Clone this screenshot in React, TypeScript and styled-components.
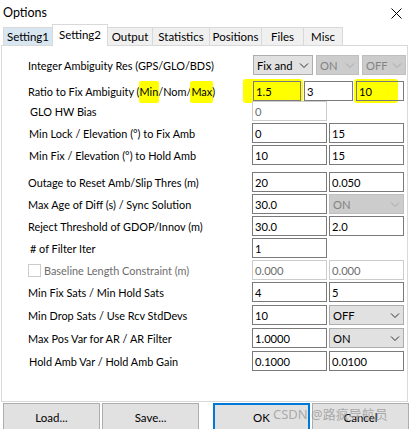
import React from "react";
import styled, { createGlobalStyle, css } from "styled-components";

const GlobalStyle = createGlobalStyle`
  body {
    margin: 0;
    background: #ffffff;
    font-family: Lato, "Liberation Sans", sans-serif;
    font-size: 10.9px;
    color: #000000;
  }
`;

const Window = styled.div`
  width: 412px;
  height: 429px;
  overflow: hidden;
  position: relative;
  background: #ffffff;
  display: flex;
  flex-direction: column;
`;

const TitleBar = styled.div`
  height: 25px;
  display: flex;
  align-items: center;
  justify-content: space-between;
  padding: 0 10px 0 3px;
  font-size: 12.5px;
  flex-shrink: 0;
`;

const CloseIcon = styled.svg`
  width: 11px;
  height: 11px;
  margin-top: 1px;
`;

const TabRow = styled.div`
  height: 21px;
  display: flex;
  align-items: flex-end;
  padding-left: 3px;
  flex-shrink: 0;
  position: relative;
  z-index: 1;
`;

const Tab = styled.div<{ $active?: boolean; $hover?: boolean; $w: number }>`
  width: ${(p) => p.$w}px;
  height: 19px;
  box-sizing: border-box;
  border: 1px solid #d9d9d9;
  border-right: none;
  display: flex;
  align-items: center;
  justify-content: center;
  font-size: 11.5px;
  background: ${(p) => (p.$hover ? "#d8e6f2" : "#f0f0f0")};
  &:last-child {
    border-right: 1px solid #d9d9d9;
  }
  ${(p) =>
    p.$active &&
    css`
      height: 22px;
      background: #ffffff;
      border-bottom: none;
      border-right: 1px solid #d9d9d9;
      margin-right: -1px;
      padding-bottom: 3px;
      position: relative;
      z-index: 2;
    `}
`;

const Panel = styled.div`
  margin-left: 1px;
  margin-top: -1px;
  width: 407px;
  height: 357px;
  box-sizing: border-box;
  border: 1px solid #d9d9d9;
  background: #ffffff;
  padding-top: 9px;
  display: flex;
  flex-direction: column;
  flex-shrink: 0;
`;

const Row = styled.div<{ $extra?: number }>`
  display: grid;
  grid-template-columns: 250px 1fr;
  align-items: center;
  height: 20px;
  margin-top: ${(p) => 2 + (p.$extra ?? 0)}px;
  &:first-child {
    margin-top: 0;
  }
`;

const Label = styled.div<{ $indent?: number; $disabled?: boolean }>`
  padding-left: ${(p) => 26 + (p.$indent ?? 0)}px;
  white-space: nowrap;
  color: ${(p) => (p.$disabled ? "#6d6d6d" : "#000000")};
  display: flex;
  align-items: center;
  position: relative;
`;

const Controls = styled.div<{ $cols: string; $gap: number; $shift?: number }>`
  display: grid;
  grid-template-columns: ${(p) => p.$cols};
  column-gap: ${(p) => p.$gap}px;
  margin-left: ${(p) => p.$shift ?? 0}px;
  height: 20px;
`;

const Field = styled.div<{ $disabled?: boolean; $marked?: boolean }>`
  box-sizing: border-box;
  height: 20px;
  border: 1px solid ${(p) => (p.$disabled ? "#cccccc" : "#7a7a7a")};
  background: ${(p) => (p.$marked ? "#ffff00" : "#ffffff")};
  color: ${(p) => (p.$disabled ? "#6d6d6d" : "#000000")};
  padding-left: 2px;
  display: flex;
  align-items: center;
  overflow: hidden;
  white-space: nowrap;
  position: relative;
  font-size: 11.2px;
`;

const Select = styled.div<{ $disabled?: boolean }>`
  box-sizing: border-box;
  height: 20px;
  border: 1px solid ${(p) => (p.$disabled ? "#bfbfbf" : "#adadad")};
  background: ${(p) => (p.$disabled ? "#cccccc" : "#e1e1e1")};
  color: ${(p) => (p.$disabled ? "#838383" : "#000000")};
  display: flex;
  align-items: center;
  padding-left: 3px;
  overflow: hidden;
  font-size: 11.2px;
`;

const SelectText = styled.span`
  flex: 1;
  min-width: 0;
  overflow: hidden;
  white-space: nowrap;
  text-overflow: clip;
`;

const Chevron = styled.svg<{ $disabled?: boolean }>`
  width: 16px;
  height: 8px;
  flex-shrink: 0;
  stroke: ${(p) => (p.$disabled ? "#a8a8a8" : "#303030")};
`;

const Mark = styled.span`
  background: #ffff00;
  padding: 4px 1px 5px;
  margin: 2px -1px 0;
  border-radius: 2px;
`;

const Smear = styled.div<{ $left: number; $width: number }>`
  position: absolute;
  left: ${(p) => p.$left}px;
  width: ${(p) => p.$width}px;
  top: -2px;
  bottom: -2px;
  background: #ffff00;
  border-radius: 3px;
  z-index: -1;
`;

const MarkWrap = styled.div`
  position: relative;
  z-index: 0;
  display: flex;
`;

const CheckBox = styled.span`
  width: 13px;
  height: 13px;
  box-sizing: border-box;
  border: 1px solid #cccccc;
  background: #ffffff;
  margin-right: 3px;
`;

const ButtonBar = styled.div`
  display: flex;
  padding-left: 3px;
  margin-top: 1px;
  height: 28px;
`;

const Button = styled.div<{ $primary?: boolean; $push?: number }>`
  width: 97px;
  height: 28px;
  box-sizing: border-box;
  margin-left: ${(p) => p.$push ?? 2}px;
  background: #e1e1e1;
  border: ${(p) => (p.$primary ? "2px solid #0078d7" : "1px solid #adadad")};
  display: flex;
  align-items: center;
  justify-content: center;
  font-size: 11.5px;
  &:first-child {
    margin-left: 0;
  }
`;

const Watermark = styled.div`
  position: absolute;
  left: 273px;
  top: 404px;
  font-size: 13px;
  color: rgba(150, 150, 150, 0.75);
  font-family: "Noto Sans", "Noto Sans CJK SC", sans-serif;
`;

const Dropdown = ({ value, disabled }: { value: string; disabled?: boolean }) => (
  <Select $disabled={disabled}>
    <SelectText>{value}</SelectText>
    <Chevron $disabled={disabled} viewBox="0 0 16 8" fill="none" strokeWidth="1">
      <path d="M4 2.5l4 4 4-4" />
    </Chevron>
  </Select>
);

type Cell = { v: string; kind?: "select"; disabled?: boolean };
type RowDef = { label: string; indent?: number; extra?: number; cells: Cell[] };

const pair = (a: Cell, b: Cell) => [a, b];

const rows: RowDef[] = [
  { label: "Min Lock / Elevation (°) to Fix Amb", indent: 1, cells: pair({ v: "0" }, { v: "15" }) },
  { label: "Min Fix / Elevation (°) to Hold Amb", indent: 1, cells: pair({ v: "10" }, { v: "15" }) },
  { label: "Outage to Reset Amb/Slip Thres (m)", extra: 5, cells: pair({ v: "20" }, { v: "0.050" }) },
  { label: "Max Age of Diff (s) / Sync Solution", cells: pair({ v: "30.0" }, { v: "ON", kind: "select", disabled: true }) },
  { label: "Reject Threshold of GDOP/Innov (m)", cells: pair({ v: "30.0" }, { v: "2.0" }) },
  { label: "# of Filter Iter", indent: 2, cells: [{ v: "1" }] },
];

const rows2: RowDef[] = [
  { label: "Min Fix Sats / Min Hold Sats", cells: pair({ v: "4" }, { v: "5" }) },
  { label: "Min Drop Sats / Use Rcv StdDevs", extra: 1, cells: pair({ v: "10" }, { v: "OFF", kind: "select" }) },
  { label: "Max Pos Var for AR / AR Filter", extra: 1, cells: pair({ v: "1.0000" }, { v: "ON", kind: "select" }) },
  { label: "Hold Amb Var / Hold Amb Gain", indent: 1, extra: 1, cells: pair({ v: "0.1000" }, { v: "0.0100" }) },
];

const renderCell = (c: Cell, i: number) =>
  c.kind === "select" ? (
    <Dropdown key={i} value={c.v} disabled={c.disabled} />
  ) : (
    <Field key={i} $disabled={c.disabled}>
      {c.v}
    </Field>
  );

const renderRow = (r: RowDef) => (
  <Row key={r.label} $extra={r.extra}>
    <Label $indent={r.indent}>{r.label}</Label>
    <Controls $cols="75px 75px" $gap={2}>
      {r.cells.map(renderCell)}
    </Controls>
  </Row>
);

const tabs = [
  { name: "Setting1", w: 49, hover: true },
  { name: "Setting2", w: 56, active: true },
  { name: "Output", w: 45 },
  { name: "Statistics", w: 57 },
  { name: "Positions", w: 52 },
  { name: "Files", w: 42 },
  { name: "Misc", w: 40 },
];

const App: React.FC = () => {
  return (
    <Window>
      <GlobalStyle />
      <TitleBar>
        <span>Options</span>
        <CloseIcon viewBox="0 0 11 11" stroke="#000" strokeWidth="1" fill="none">
          <path d="M0.5 0.5l10 10M10.5 0.5l-10 10" />
        </CloseIcon>
      </TitleBar>
      <TabRow>
        {tabs.map((t) => (
          <Tab key={t.name} $w={t.w} $active={t.active} $hover={t.hover}>
            {t.name}
          </Tab>
        ))}
      </TabRow>
      <Panel>
        <Row>
          <Label>Integer Ambiguity Res (GPS/GLO/BDS)</Label>
          <Controls $cols="60px 43px 44px" $gap={3} $shift={1}>
            <Dropdown value="Fix and" />
            <Dropdown value="ON" disabled />
            <Dropdown value="OFF" disabled />
          </Controls>
        </Row>
        <Row $extra={2}>
          <Label>
            Ratio to Fix Ambiguity (<Mark>Min</Mark>/Nom/<Mark>Max</Mark>)
          </Label>
          <Controls $cols="48px 49px 48px" $gap={3} $shift={1}>
            <MarkWrap>
              <Smear $left={-10} $width={60} />
              <Field $marked style={{ flex: 1 }}>1.5</Field>
            </MarkWrap>
            <Field>3</Field>
            <MarkWrap>
              <Smear $left={-2} $width={44} />
              <Field style={{ flex: 1, background: "linear-gradient(90deg, #ffff00 0 41px, #ffffff 41px)" }}>10</Field>
            </MarkWrap>
          </Controls>
        </Row>
        <Row>
          <Label $indent={2}>GLO HW Bias</Label>
          <Controls $cols="75px" $gap={2}>
            <Field $disabled>0</Field>
          </Controls>
        </Row>
        {rows.map(renderRow)}
        <Row>
          <Label $disabled>
            <CheckBox />
            Baseline Length Constraint (m)
          </Label>
          <Controls $cols="75px 75px" $gap={2}>
            <Field $disabled>0.000</Field>
            <Field $disabled>0.000</Field>
          </Controls>
        </Row>
        {rows2.map(renderRow)}
      </Panel>
      <ButtonBar>
        <Button>Load...</Button>
        <Button>Save...</Button>
        <Button $primary $push={14}>OK</Button>
        <Button>Cancel</Button>
      </ButtonBar>
      <Watermark>CSDN @路疯导航员</Watermark>
    </Window>
  );
};

export default App;
